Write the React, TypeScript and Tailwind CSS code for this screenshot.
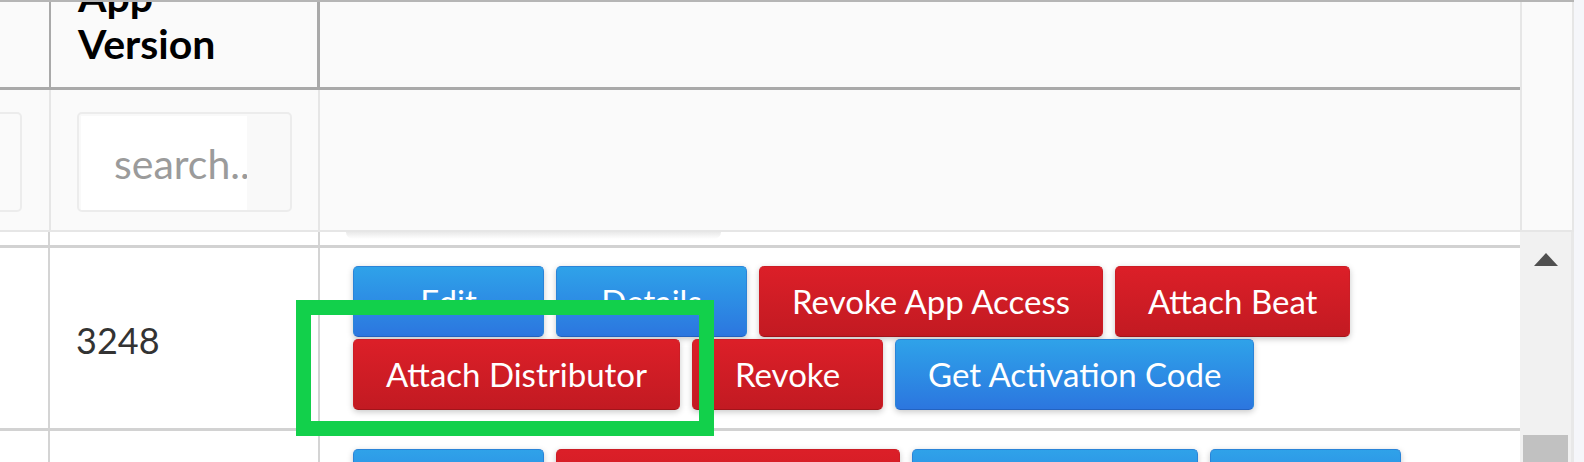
type Tone = 'blue' | 'red'

const toneClass: Record<Tone, string> = {
  blue: 'bg-linear-to-b from-[#2fa2e9] to-[#2c76df] border-[#2a84d8] border-b-[#2463c0]',
  red: 'bg-linear-to-b from-[#dc1f28] to-[#c21a22] border-[#cc1d25] border-b-[#a1151b]',
}

interface ActionButtonProps {
  label: string
  tone: Tone
  className?: string
}

function ActionButton({ label, tone, className = '' }: ActionButtonProps) {
  return (
    <button
      className={`h-[71px] min-w-[191px] shrink-0 px-[32px] rounded-[5px] border text-[33px] leading-none text-white shadow-[0_2px_6px_rgba(0,0,0,0.22)] ${toneClass[tone]} ${className}`}
    >
      {label}
    </button>
  )
}

const firstRow: { label: string; tone: Tone }[] = [
  { label: 'Edit', tone: 'blue' },
  { label: 'Details', tone: 'blue' },
  { label: 'Revoke App Access', tone: 'red' },
  { label: 'Attach Beat', tone: 'red' },
  { label: 'Attach Distributor', tone: 'red' },
  { label: 'Revoke', tone: 'red' },
  { label: 'Get Activation Code', tone: 'blue' },
]

function BodyRow({
  className = '',
  version,
  children,
}: {
  className?: string
  version?: string
  children?: React.ReactNode
}) {
  return (
    <div className={`flex shrink-0 overflow-hidden border-b-[3px] border-[#d2d2d2] ${className}`}>
      <div className="w-[50px] shrink-0 border-r-2 border-[#d4d4d4]" />
      <div className="flex w-[270px] shrink-0 items-center border-r-2 border-[#d4d4d4] pl-[26px] pt-[4px] text-[36px] text-[#333]">
        {version}
      </div>
      <div className="flex-1 overflow-hidden">{children}</div>
    </div>
  )
}

export default function App() {
  return (
    <div className="relative h-[462px] w-[1584px] overflow-hidden bg-[#f5f6fa] font-['Lato',sans-serif]">
      <div className="w-[1574px]">
        {/* column titles */}
        <div className="flex h-[90px] border-t-2 border-[#b5b5b5] bg-[#fafafa]">
          <div className="flex w-[1520px] border-b-[3px] border-[#a9a9a9]">
            <div className="w-[51px] border-r-2 border-[#a9a9a9]" />
            <div className="w-[269px] overflow-hidden border-r-[3px] border-[#a9a9a9] pl-[27px]">
              <div className="-mt-[29px] text-[41px] font-bold leading-[47px] text-black">
                <div>App</div>
                <div>Version</div>
              </div>
            </div>
            <div className="flex-1" />
          </div>
          <div className="w-[54px] border-x-2 border-[#e6e6e6]" />
        </div>

        {/* filters */}
        <div className="flex h-[142px] border-b-2 border-[#e6e6e6] bg-[#fafafa]">
          <div className="w-[51px] border-r-2 border-[#e6e6e6] pt-[22px]">
            <div className="h-[100px] w-[22px] rounded-r-[5px] border-2 border-l-0 border-[#ececec] bg-[#fafafa]" />
          </div>
          <div className="w-[269px] border-r-2 border-[#e6e6e6] pl-[26px] pt-[22px]">
            <div className="h-[100px] w-[215px] rounded-[5px] border-2 border-[#ececec] bg-[#f9f9f9] pl-[2px] pt-[2px]">
              <input
                placeholder="search.."
                className="h-[94px] w-[166px] bg-white pl-[33px] text-[41px] text-[#555] outline-none placeholder:text-[#9b9b9b]"
              />
            </div>
          </div>
          <div className="w-[1200px]" />
          <div className="w-[54px] border-x-2 border-[#e6e6e6]" />
        </div>

        {/* body */}
        <div className="flex h-[230px]">
          <div className="flex w-[1520px] flex-col overflow-hidden bg-white">
            <BodyRow className="h-[16px]">
              <div className="ml-[26px] h-[7px] w-[375px] rounded-b-[40px] bg-linear-to-b from-[#e9e9e9] to-white" />
            </BodyRow>
            <BodyRow className="h-[183px]" version="3248">
              <div className="flex w-[1160px] flex-wrap gap-x-[12px] gap-y-[2px] pl-[33px] pt-[18px]">
                {firstRow.map((b) => (
                  <ActionButton key={b.label} label={b.label} tone={b.tone} />
                ))}
              </div>
            </BodyRow>
            <BodyRow className="h-[120px]">
              <div className="flex gap-x-[12px] pl-[33px] pt-[18px]">
                <ActionButton label="Edit" tone="blue" />
                <ActionButton label="Revoke App Access" tone="red" />
                <ActionButton label="Reset Device" tone="blue" className="w-[286px]" />
                <ActionButton label="Details" tone="blue" />
              </div>
            </BodyRow>
          </div>
          <div className="flex w-[51px] flex-col items-center justify-between bg-[#f1f1f1]">
            <svg width="24" height="13" viewBox="0 0 24 13" className="mt-[21px]">
              <polygon points="12,0 24,13 0,13" fill="#505050" />
            </svg>
            <div className="h-[27px] w-[45px] bg-[#c1c1c1]" />
          </div>
          <div className="w-[3px] bg-[#e8e8e8]" />
        </div>
      </div>

      {/* highlight */}
      <div className="absolute left-[296px] top-[300px] h-[136px] w-[418px] border-[15px] border-[#12d04b]" />
    </div>
  )
}
